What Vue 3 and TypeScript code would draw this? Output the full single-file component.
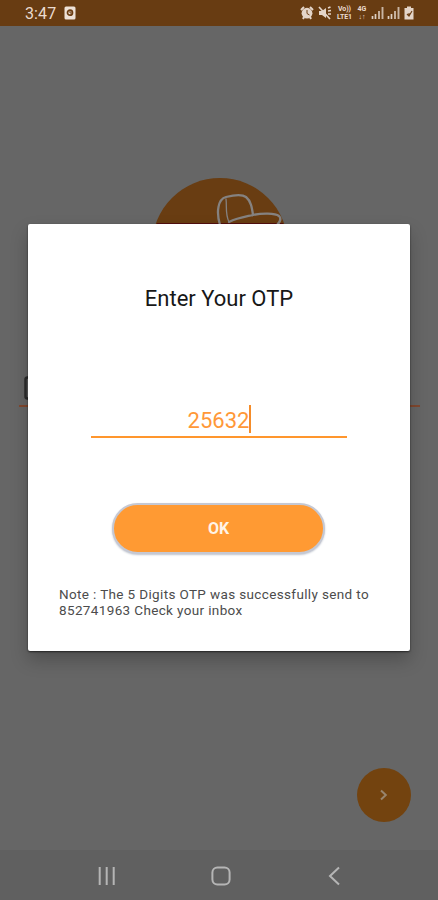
<script setup lang="ts">
import { ref } from 'vue'

const otp = ref('25632')
const phone = ref('852741963')
</script>

<template>
  <div class="screen">
    <header class="status">
      <span class="time">3:47</span>
      <svg class="notice" viewBox="0 0 12 14">
        <rect x="0.5" y="0.5" width="11" height="13" rx="1.5" fill="#eee2d8" />
        <circle cx="6" cy="6.7" r="2.5" fill="none" stroke="#6b3d12" stroke-width="1.7" />
        <path d="M6 5V7H8" fill="none" stroke="#6b3d12" />
      </svg>
      <svg class="alarm" viewBox="0 0 14 14">
        <path d="M1 4 4 1M13 4 10 1M3 13 4 11M11 13 10 11" stroke="#e4d5c9" stroke-width="2" />
        <circle cx="7" cy="7.2" r="5.4" fill="#e4d5c9" />
        <path d="M7 4V7.5L9.5 9" fill="none" stroke="#6b3d12" />
      </svg>
      <svg class="mute" viewBox="0 0 14 14">
        <path d="M1 5H4L8 2V12L4 9H1Z" fill="#e4d5c9" />
        <path d="M1 1 12 13M10 2 12.5 1M10 5 13 4.5M10 8 13 8" stroke="#e4d5c9" stroke-width="1.7" />
      </svg>
      <span class="network lte"><span>Vo))</span><span>LTE1</span></span>
      <span class="network"><span>4G</span><span>↓↑</span></span>
      <svg v-for="n in 2" :key="n" class="signal" viewBox="0 0 13 14">
        <path d="M1.5 13V10M4.5 13V8" stroke="#ded0c4" stroke-width="1.7" />
        <path d="M8 13V5M11.5 13V1" stroke="#c9b5a4" stroke-width="1.9" />
      </svg>
      <svg class="battery" viewBox="0 0 10 14">
        <path d="M3 .5H7V2H9.5V13.5H.5V2H3Z" fill="#e4d5c9" />
        <path d="M3 8 5 10 8 5M5 10V7" fill="none" stroke="#6b3d12" stroke-width="1.1" />
      </svg>
    </header>

    <main class="stage">
      <section class="page">
        <svg class="logo" viewBox="0 0 140 140">
          <circle cx="70" cy="68" r="68" fill="#693d12" />
          <path d="M6.5 45H133.5A68 68 0 0 1 6.5 45" fill="#541010" />
          <g fill="none" stroke="#858280" stroke-width="2.3" stroke-linecap="round">
            <path d="M70 47C66 34 68 21 76 19C84 17 92 16 96 19C101 23 102 30 103 37C112 35 125 35 129 38C132 41 130 44 127 47" />
            <path d="M79 44C87 40 94 39 103 37" />
            <path d="M79 44C75 36 77 28 76 21" stroke-width="1.3" />
          </g>
        </svg>
        <div class="phone-field">
          <svg viewBox="0 0 14 24"><rect x="1.5" y="1.5" width="11" height="21" rx="2" fill="none" stroke="#2c2c2c" stroke-width="2.5" /></svg>
        </div>
        <button class="next" aria-label="Next">
          <svg viewBox="0 0 10 14"><path d="M2 2.5 6.8 7 2 11.5" fill="none" stroke="#98856e" stroke-width="2" /></svg>
        </button>
      </section>

      <section class="dialog" role="dialog">
        <h1>Enter Your OTP</h1>
        <div class="otp"><span>{{ otp }}</span><i class="caret"></i></div>
        <button class="ok">OK</button>
        <p>Note : The 5 Digits OTP was successfully send to<br />{{ phone }} Check your inbox</p>
      </section>
    </main>

    <nav class="navbar">
      <svg viewBox="0 0 24 24"><path d="M4.7 3V21M11.7 3V21M18.7 3V21" /></svg>
      <svg viewBox="0 0 24 24"><rect x="3.4" y="3.4" width="17.2" height="17.2" rx="5" /></svg>
      <svg viewBox="0 0 24 24"><path d="M16 3.5 7 12 16 20.5" /></svg>
    </nav>
  </div>
</template>

<style>
body {
  margin: 0;
}
</style>

<style scoped>
.screen {
  display: flex;
  flex-direction: column;
  height: 900px;
  overflow: hidden;
  background: #666;
  font-family: Roboto, "Liberation Sans", sans-serif;
}
.status {
  display: flex;
  align-items: center;
  box-sizing: border-box;
  height: 26px;
  padding: 0 24px 0 25px;
  background: #683c12;
  color: #eadbd0;
}
.time {
  width: 39px;
  font-size: 16px;
  letter-spacing: 0.1px;
}
.notice {
  width: 12px;
  height: 14px;
  margin-right: auto;
}
.alarm {
  width: 14px;
  height: 14px;
  margin-right: 4px;
}
.mute {
  width: 14px;
  height: 14px;
  margin-right: 4px;
}
.network {
  display: flex;
  flex-direction: column;
  width: 12px;
  margin-right: 3px;
  font-size: 7px;
  font-weight: 700;
  line-height: 8px;
  text-align: center;
}
.lte {
  width: 17px;
  margin-right: 3px;
  letter-spacing: -0.1px;
}
.signal {
  width: 13px;
  height: 14px;
  margin-right: 3px;
}
.battery {
  width: 10px;
  height: 14px;
  margin-left: 1px;
}
.stage {
  display: grid;
  flex: 1;
}
.page,
.dialog {
  grid-area: 1 / 1;
}
.page {
  display: flex;
  flex-direction: column;
  align-items: center;
  padding: 152px 18px 28px 19px;
}
.logo {
  width: 140px;
  height: 140px;
}
.phone-field {
  align-self: stretch;
  height: 30px;
  margin-top: 57px;
  border-bottom: 2px solid #81482f;
}
.phone-field svg {
  width: 14px;
  height: 24px;
  margin: 1px 0 0 5px;
}
.next {
  display: grid;
  place-items: center;
  align-self: flex-end;
  width: 54px;
  height: 54px;
  margin: auto 9.5px 0 0;
  padding: 0;
  border: 0;
  border-radius: 50%;
  background: #73430f;
}
.next svg {
  width: 10px;
  height: 14px;
}
.dialog {
  z-index: 1;
  display: flex;
  flex-direction: column;
  align-items: center;
  align-self: start;
  box-sizing: border-box;
  height: 427px;
  margin: 198px 28px 0;
  border-radius: 2px;
  background: #fff;
  box-shadow: 0 1px 2px rgba(0, 0, 0, 0.6), 0 9px 18px rgba(0, 0, 0, 0.23);
}
h1 {
  margin: 61px 0 0;
  color: #171717;
  font-size: 22px;
  font-weight: 400;
  line-height: 28px;
}
.otp {
  display: flex;
  align-items: flex-start;
  justify-content: center;
  box-sizing: border-box;
  width: 256px;
  height: 34px;
  margin-top: 91px;
  padding-left: 1px;
  border-bottom: 2px solid #ff962d;
  color: #ff9838;
  font-size: 22px;
  line-height: 34px;
}
.caret {
  width: 2px;
  height: 28px;
  margin-top: 1px;
  background: #f58c29;
}
.ok {
  box-sizing: border-box;
  width: 213px;
  height: 51px;
  margin: 65px 1px 0 0;
  padding: 0;
  border: 2px solid #c5c8d3;
  border-radius: 26px;
  background: #ff9a33;
  box-shadow: 0 1px 2px #bfc4cf;
  color: #fff4e7;
  font-family: inherit;
  font-size: 16px;
  font-weight: 700;
}
p {
  align-self: stretch;
  margin: 32px 0 0 31px;
  color: #4c4c4c;
  font-size: 13.5px;
  line-height: 16px;
  letter-spacing: 0.36px;
  white-space: nowrap;
}
.navbar {
  display: flex;
  align-items: center;
  justify-content: space-between;
  box-sizing: border-box;
  height: 50px;
  padding: 2px 91px 0 95px;
  background: #606060;
}
.navbar svg {
  width: 24px;
  height: 24px;
  fill: none;
  stroke: #b5b5b5;
  stroke-width: 2;
}
</style>
